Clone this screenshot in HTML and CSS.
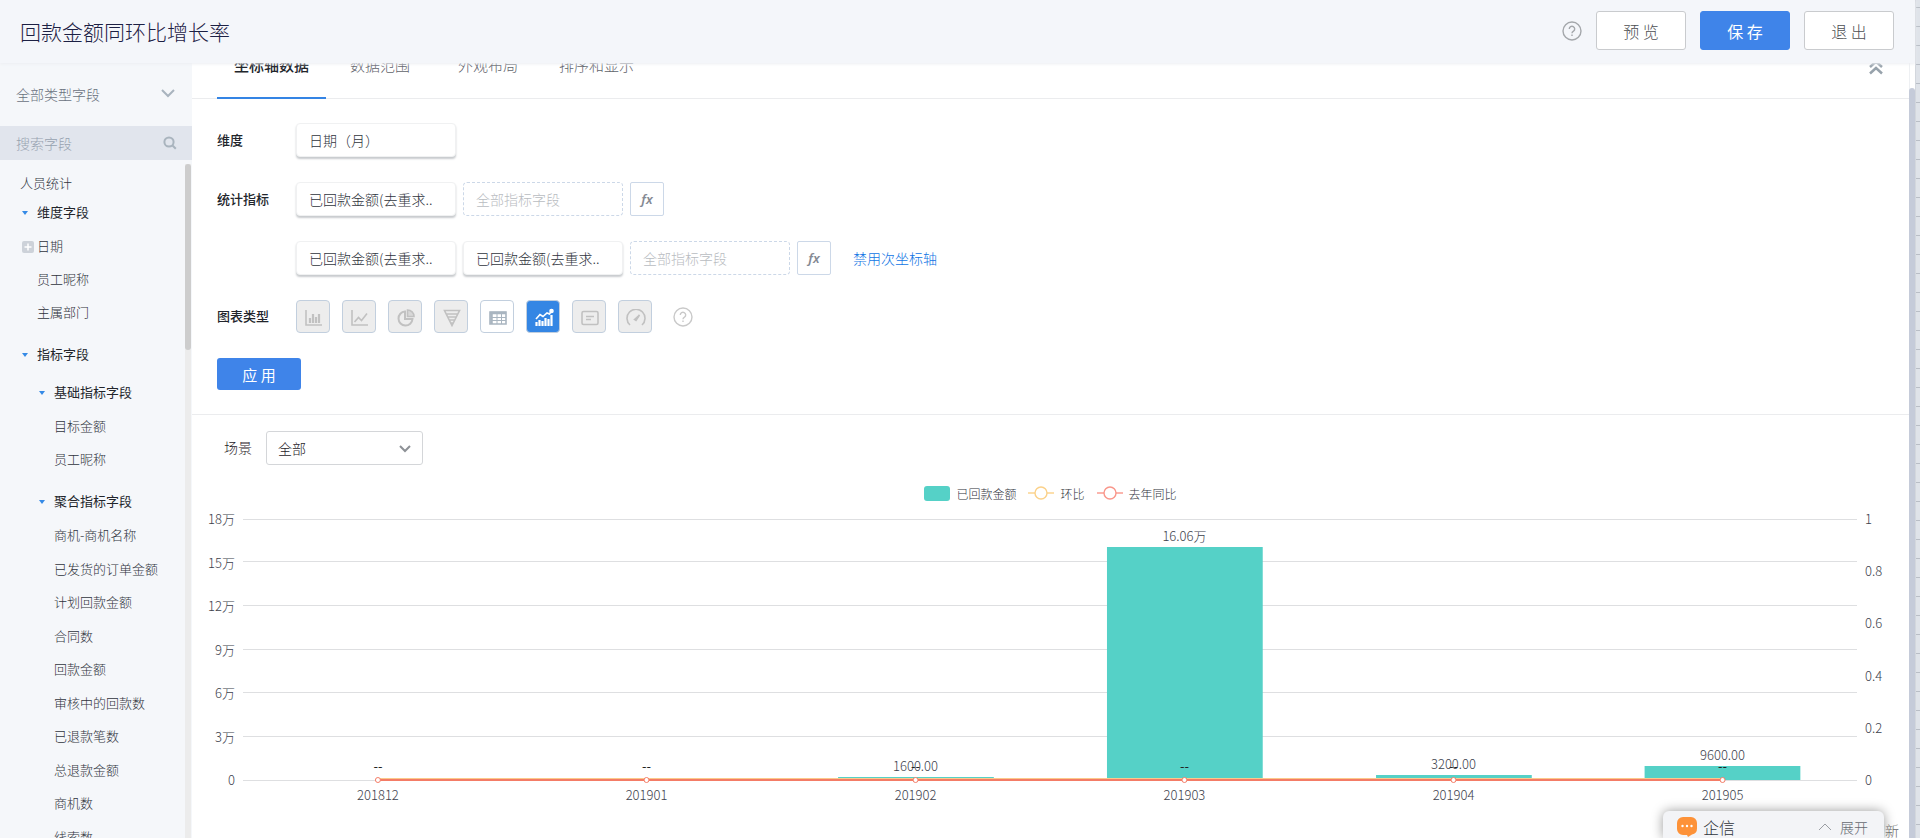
FILE: index.html
```html
<!DOCTYPE html>
<html lang="zh-CN">
<head>
<meta charset="utf-8">
<title>回款金额同环比增长率</title>
<link rel="stylesheet" href="styles.css">
</head>
<body>
<div class="app">
  <div class="window">
    <header class="header">
      <h1 class="title">回款金额同环比增长率</h1>
      <button class="help" aria-label="帮助"><svg width="20" height="20" viewBox="0 0 20 20"><circle cx="10" cy="10" r="9"/><path d="M7.3 8a2.7 2.7 0 1 1 4.2 2.2c-1 .6-1.5 1-1.5 2.1M10 13.6v1.5"/></svg></button>
      <button class="btn">预 览</button>
      <button class="btn btn-primary">保 存</button>
      <button class="btn">退 出</button>
    </header>
    <div class="body">
      <aside class="sidebar">
        <button class="type-picker">全部类型字段<svg width="14" height="9" viewBox="0 0 14 9"><path d="M1 1l6 6 6-6"/></svg></button>
        <label class="search"><input type="text" placeholder="搜索字段" aria-label="搜索字段"><svg width="14" height="14" viewBox="0 0 14 14"><circle cx="6" cy="6" r="4.6"/><path d="M9.5 9.5l3.3 3.3"/></svg></label>
        <div class="tree-wrap">
          <div class="tree">
            <div class="tree-top">人员统计</div>
            <div class="group group-first">维度字段</div>
            <ul class="fields">
              <li class="expandable"><svg width="12" height="12" viewBox="0 0 12 12"><rect width="12" height="12" rx="2"/><path d="M6 2.5v7M2.5 6h7"/></svg>日期</li>
              <li>员工昵称</li>
              <li>主属部门</li>
            </ul>
            <div class="group">指标字段</div>
            <div class="nested">
              <div class="group group-sub">基础指标字段</div>
              <ul class="fields">
                <li>目标金额</li>
                <li>员工昵称</li>
              </ul>
              <div class="group">聚合指标字段</div>
              <ul class="fields fields-long">
                <li>商机-商机名称</li>
                <li>已发货的订单金额</li>
                <li>计划回款金额</li>
                <li>合同数</li>
                <li>回款金额</li>
                <li>审核中的回款数</li>
                <li>已退款笔数</li>
                <li>总退款金额</li>
                <li>商机数</li>
                <li>线索数</li>
              </ul>
            </div>
          </div>
          <div class="tree-track"><div class="tree-thumb"></div></div>
        </div>
      </aside>
      <main class="main">
        <nav class="tabs">
          <button class="tab tab-active">坐标轴数据</button>
          <button class="tab">数据范围</button>
          <button class="tab tab-spaced">外观布局</button>
          <button class="tab">排序和显示</button>
          <button class="collapse" aria-label="收起"><svg width="14" height="15" viewBox="0 0 14 15"><path d="M1 7l6-5.500 6 5.500M1 13.500l6-5.500 6 5.500"/></svg></button>
        </nav>
        <section class="settings">
          <div class="row">
            <span class="label">维度</span>
            <div class="controls"><button class="chip">日期（月）</button></div>
          </div>
          <div class="row">
            <span class="label">统计指标</span>
            <div class="controls">
              <button class="chip">已回款金额(去重求..</button>
              <button class="slot">全部指标字段</button>
              <button class="fx">fx</button>
            </div>
          </div>
          <div class="row">
            <span class="label"></span>
            <div class="controls">
              <button class="chip">已回款金额(去重求..</button>
              <button class="chip">已回款金额(去重求..</button>
              <button class="slot">全部指标字段</button>
              <button class="fx">fx</button>
              <a class="link" href="#">禁用次坐标轴</a>
            </div>
          </div>
          <div class="row">
            <span class="label">图表类型</span>
            <div class="types">
              <button class="type" aria-label="柱状图"><svg width="18" height="18" viewBox="0 0 18 18"><path d="M1 1v15h16" fill="none"/><path d="M5 14V9M8 14V5M11 14V8M14 14V5" stroke-width="2.200"/></svg></button>
              <button class="type" aria-label="折线图"><svg width="18" height="18" viewBox="0 0 18 18"><path d="M1 1v15h16M3.500 13l4-4.500 3 3 5.500-7" fill="none"/></svg></button>
              <button class="type" aria-label="饼图"><svg width="18" height="18" viewBox="0 0 18 18"><path d="M8 2.500a7 7 0 1 0 7.500 7.500H8z" fill="none" stroke-width="2"/><path d="M10.500 1v6.500H17A6.500 6.500 0 0 0 10.500 1z" fill="#d8d8d8"/></svg></button>
              <button class="type" aria-label="漏斗图"><svg width="18" height="18" viewBox="0 0 18 18"><path d="M1.500 1.500h15L9 16.500zM3 5h12M4.500 8h9M6.500 11h5M8 14h2" fill="none"/></svg></button>
              <button class="type type-open" aria-label="表格"><svg width="18" height="18" viewBox="0 0 18 18"><path d="M1 3h16v12H1z" fill="none"/><path d="M1 4h16M2.500 3v12" stroke-width="2.500"/><path d="M3 8.500h14M3 11.500h14M8 4v11M12.500 4v11" fill="none" stroke-width="1"/></svg></button>
              <button class="type type-active" aria-label="组合图"><svg width="20" height="20" viewBox="0 0 20 20"><path d="M2 11l4-4.500 3 2 4-3.500 2.500 1 3-4.500" fill="none" stroke-width="1.600"/><circle cx="17.500" cy="3" r="1.500" fill="#fff"/><path d="M2.500 18v-4M5.500 18v-6M8.500 18v-5M11.500 18v-8M14.500 18v-7M17.500 18V7" stroke-width="2.200"/></svg></button>
              <button class="type" aria-label="卡片"><svg width="18" height="18" viewBox="0 0 18 18"><rect x="1" y="2.500" width="16" height="13" rx="1.500" fill="none"/><path d="M5 7.500h8M5 10.500h5" fill="none"/></svg></button>
              <button class="type" aria-label="仪表盘"><svg width="20" height="18" viewBox="0 0 20 18"><path d="M4 16A9 9 0 1 1 16 16" fill="none"/><path d="M8.500 10.500L13.500 6l-3.500 5.500z" fill="#b9b9b9"/></svg></button>
              <button class="help help-light" aria-label="图表类型说明"><svg width="20" height="20" viewBox="0 0 20 20"><circle cx="10" cy="10" r="9"/><path d="M7.300 8a2.700 2.700 0 1 1 4.200 2.200c-1 .6-1.500 1-1.500 2.100M10 13.600v1.500"/></svg></button>
            </div>
          </div>
          <button class="apply">应 用</button>
        </section>
        <section class="scene">
          <label for="scene">场景</label>
          <span class="select-wrap">
            <select id="scene"><option>全部</option></select>
            <svg width="12" height="8" viewBox="0 0 12 8"><path d="M1 1l5 5 5-5"/></svg>
          </span>
        </section>
        <section class="chart">
          <div class="legend">
            <span class="legend-item"><i class="swatch"></i>已回款金额</span>
            <span class="legend-item"><svg class="mom" width="26" height="14" viewBox="0 0 26 14"><path d="M0 7h26"/><circle cx="13" cy="7" r="6"/></svg>环比</span>
            <span class="legend-item"><svg class="yoy" width="26" height="14" viewBox="0 0 26 14"><path d="M0 7h26"/><circle cx="13" cy="7" r="6"/></svg>去年同比</span>
          </div>
          <div class="plot">
            <svg class="plot-svg" width="100%" height="300">
              <g class="grid">
                <line x2="100%" y1="0.500" y2="0.500"/><line x2="100%" y1="42.500" y2="42.500"/><line x2="100%" y1="86.500" y2="86.500"/><line x2="100%" y1="130.500" y2="130.500"/><line x2="100%" y1="173.500" y2="173.500"/><line x2="100%" y1="217.500" y2="217.500"/><line x2="100%" y1="261.500" y2="261.500"/>
              </g>
              <g class="tick tick-left">
                <text x="-8" y="5">18万</text><text x="-8" y="49">15万</text><text x="-8" y="92">12万</text><text x="-8" y="136">9万</text><text x="-8" y="179">6万</text><text x="-8" y="223">3万</text><text x="-8" y="266">0</text>
              </g>
              <svg x="100%" y="0" width="60" height="300" class="tick open">
                <text x="8" y="5">1</text><text x="8" y="57">0.8</text><text x="8" y="109">0.6</text><text x="8" y="162">0.4</text><text x="8" y="214">0.2</text><text x="8" y="266">0</text>
              </svg>
              <g class="bars">
                <rect x="36.870%" y="258" width="9.650%" height="3"/><rect x="53.530%" y="28" width="9.650%" height="233"/><rect x="70.200%" y="256" width="9.650%" height="5"/><rect x="86.840%" y="247" width="9.650%" height="14"/>
              </g>
              <line class="line-mom" x1="8.360%" x2="91.670%" y1="260" y2="260"/>
              <line class="line-yoy" x1="8.360%" x2="91.670%" y1="261" y2="261"/>
              <g class="dots">
                <circle cx="8.360%" cy="261" r="2.500"/><circle cx="25%" cy="261" r="2.500"/><circle cx="41.670%" cy="261" r="2.500"/><circle cx="58.330%" cy="261" r="2.500"/><circle cx="75%" cy="261" r="2.500"/><circle cx="91.670%" cy="261" r="2.500"/>
              </g>
              <g class="tick tick-mid">
                <text x="41.670%" y="252">1600.00</text><text x="58.330%" y="22">16.06万</text><text x="75%" y="250">3200.00</text><text x="91.670%" y="241">9600.00</text>
                <text x="8.360%" y="281">201812</text><text x="25%" y="281">201901</text><text x="41.670%" y="281">201902</text><text x="58.330%" y="281">201903</text><text x="75%" y="281">201904</text><text x="91.670%" y="281">201905</text>
              </g>
              <g class="tick tick-mid empty">
                <text x="8.360%" y="252">--</text><text x="25%" y="252">--</text><text x="41.670%" y="252">--</text><text x="58.330%" y="252">--</text><text x="75%" y="252">--</text><text x="91.670%" y="252">--</text>
              </g>
            </svg>
          </div>
          <div class="refresh">刷新</div>
        </section>
      </main>
      <div class="main-track"><div class="main-thumb"></div></div>
    </div>
  </div>
  <div class="backdrop"></div>
</div>
<div class="messenger">
  <svg width="22" height="22" viewBox="0 0 22 22"><path d="M7 1h8a6 6 0 0 1 6 6v5.500a6 6 0 0 1-5 6l-4 2.500-1-2H7a6 6 0 0 1-6-6V7a6 6 0 0 1 6-6z" fill="#fd9239"/><g fill="#fff"><circle cx="6.500" cy="10" r="1.200"/><circle cx="11" cy="10" r="1.200"/><circle cx="15.500" cy="10" r="1.200"/></g></svg>
  <span class="messenger-name">企信</span>
  <button class="expand"><svg width="14" height="8" viewBox="0 0 14 8"><path d="M1 7l6-6 6 6"/></svg>展开</button>
</div>
</body>
</html>
```

FILE: styles.css
```css
* { box-sizing: border-box; }
html, body { height: 100%; }
body {
  margin: 0;
  overflow: hidden;
  font-family: "Noto Sans CJK SC", sans-serif;
  font-size: 13px;
  font-weight: 300;
  color: #30343d;
}
button, input, select { font: inherit; color: inherit; margin: 0; }
button { border: 0; padding: 0; background: none; cursor: pointer; }
ul { list-style: none; margin: 0; padding: 0; }
svg { display: block; flex: none; }

.app { display: flex; height: 100%; }
.window { flex: 1; min-width: 0; display: flex; flex-direction: column; background: #fff; }
.backdrop {
  width: 5px;
  border-left: 1px solid #d3d7dd;
  background: repeating-linear-gradient(#dfe3e9 0 7px, #b9bec6 7px 8px, #dfe3e9 8px 19px);
}

.header {
  position: relative;
  z-index: 1;
  flex: none;
  display: flex;
  align-items: center;
  height: 63px;
  padding: 0 21px 2px 20px;
  background: #f4f6fa;
  box-shadow: 0 1px 3px #eceef2;
}
.title { flex: 1; margin: 0; font-size: 21px; font-weight: 300; color: #1c2044; }
.help svg { fill: none; stroke: #a4a7ab; stroke-width: 1.4; }
.help-light { margin-left: 9px; }
.help-light svg { stroke: #c9c9c9; }
.btn {
  width: 90px;
  height: 39px;
  margin-left: 14px;
  border: 1px solid #c9cbce;
  border-radius: 3px;
  background: #fff;
  font-size: 16px;
  color: #4c4e52;
}
.btn-primary { background: #3f84e9; border-color: #3f84e9; color: #fff; font-weight: 400; }

.body { flex: 1; min-height: 0; display: flex; }

.sidebar { width: 192px; flex: none; display: flex; flex-direction: column; background: #f5f7fa; }
.type-picker {
  flex: none;
  display: flex;
  align-items: center;
  justify-content: space-between;
  height: 63px;
  padding: 0 17px 2px 16px;
  font-size: 14px;
  color: #6a727e;
}
.type-picker svg { fill: none; stroke: #a9b4be; stroke-width: 2; }
.search {
  flex: none;
  display: flex;
  align-items: center;
  height: 34px;
  padding: 0 15px 0 16px;
  background: #e1e5ed;
}
.search input { flex: 1; min-width: 0; padding: 0; border: 0; outline: 0; background: none; font-size: 14px; }
.search input::placeholder { color: #97a2b0; opacity: 1; }
.search svg { fill: none; stroke: #a9b4be; stroke-width: 2; }

.tree-wrap { flex: 1; min-height: 0; display: flex; padding: 4px 1px 0 0; }
.tree { flex: 1; overflow: hidden; padding: 5px 0 0 20px; white-space: nowrap; }
.tree-top { line-height: 28px; }
.group {
  display: flex;
  align-items: center;
  height: 36px;
  margin-top: 7px;
  color: #22252b;
  font-weight: 400;
}
.group::before {
  content: "";
  width: 6px;
  height: 4px;
  margin: 4px 9px 0 2px;
  background: #358ae6;
  clip-path: polygon(0 0, 100% 0, 50% 100%);
}
.group-first { height: 28px; margin-top: 0; }
.group-sub { margin-top: 2px; }
.nested { padding-left: 17px; }
.fields li { height: 33px; line-height: 33px; padding-left: 17px; }
.fields-long li:nth-child(odd) { height: 34px; line-height: 34px; }
.fields .expandable { display: flex; align-items: center; gap: 3px; padding-left: 2px; }
.expandable svg { margin-top: 2px; }
.expandable rect { fill: #cdd2d9; }
.expandable path { stroke: #fff; stroke-width: 1.5; }
.group-first + .fields { padding-top: 4px; }
.tree-track { width: 6px; background: #ececec; }
.tree-thumb { height: 186px; border-radius: 3px; background: #cdcdcd; }

.main { flex: 1; min-width: 0; overflow: hidden; }
.tabs {
  display: flex;
  height: 66px;
  margin-top: -30px;
  padding: 0 26px 0 25px;
  border-bottom: 1px solid #ebecee;
}
.tab { height: 66px; margin-right: 7px; padding: 0 17px 4px; font-size: 15px; color: #5f636b; }
.tab-spaced { margin-left: 7px; }
.tab-active { padding-bottom: 2px; border-bottom: 2px solid #3484e4; font-weight: 500; color: #22252b; }
.collapse { margin-left: auto; }
.collapse svg { fill: none; stroke: #97a2ab; stroke-width: 2.5; margin-top: 4px; }

.settings {
  display: flex;
  flex-direction: column;
  gap: 25px;
  padding: 24px 25px;
  border-bottom: 1px solid #ebecee;
}
.row { display: flex; align-items: center; }
.label { width: 79px; flex: none; padding-bottom: 2px; font-weight: 500; color: #22252b; }
.controls { display: flex; align-items: center; gap: 7px; }
.chip, .slot {
  width: 160px;
  height: 34px;
  padding: 0 12px;
  border-radius: 4px;
  text-align: left;
  font-size: 14px;
  white-space: nowrap;
}
.chip { border: 1px solid #f0f1f2; box-shadow: 0 2px 2px #c8cbce; background: #fff; }
.slot { border: 1px dashed #ccd8e8; color: #b9bcc1; }
.fx {
  width: 34px;
  height: 34px;
  border: 1px solid #ccd8e8;
  border-radius: 2px;
  font-family: "Noto Sans", sans-serif;
  font-size: 13px;
  font-style: italic;
  font-weight: 600;
  color: #858a93;
}
.link { margin-left: 15px; font-size: 14px; color: #0f74e4; text-decoration: none; }
.types { display: flex; align-items: center; gap: 12px; }
.type {
  display: flex;
  align-items: center;
  justify-content: center;
  width: 34px;
  height: 33px;
  padding: 3px 0 0 1px;
  border: 1px solid #c2cfde;
  border-radius: 4px;
  background: #ededed;
}
.type svg { stroke: #c1c1c1; stroke-width: 1.6; }
.type-open { background: #fff; }
.type-open svg { stroke: #a9b5c0; }
.type-active { background: #3486e4; }
.type-active svg { stroke: #fff; }
.apply {
  width: 84px;
  height: 32px;
  border-radius: 3px;
  background: #3f84e9;
  color: #fff;
  font-size: 15px;
  font-weight: 400;
}

.scene { display: flex; align-items: center; gap: 14px; padding: 16px 32px; font-size: 14px; color: #1f2228; }
.scene label { padding-bottom: 2px; }
.select-wrap { position: relative; }
.select-wrap select {
  display: block;
  width: 157px;
  height: 34px;
  padding: 0 11px;
  border: 1px solid #d4d6d9;
  border-radius: 3px;
  background: #fff;
  appearance: none;
}
.select-wrap svg { position: absolute; right: 12px; top: 14px; fill: none; stroke: #8d9196; stroke-width: 2; pointer-events: none; }

.legend { display: flex; justify-content: center; gap: 12px; height: 38px; padding-top: 2px; font-size: 12px; }
.legend-item { display: flex; align-items: center; gap: 6px; height: 20px; }
.swatch { width: 26px; height: 15px; border-radius: 3px; background: #55d1c7; }
.mom { fill: #fff; stroke: #fbd189; stroke-width: 1.4; }
.yoy { fill: #fff; stroke: #f9968a; stroke-width: 1.4; }

.plot { padding: 0 52px 0 51px; }
.plot-svg, .open { overflow: visible; }
.grid line { stroke: #dedfe1; }
.tick { font-size: 13px; fill: #3c414b; }
.tick-left { text-anchor: end; }
.tick-mid { text-anchor: middle; }
.empty { fill: #222; font-weight: 400; }
.bars { fill: #55d1c7; }
.line-mom { stroke: #fbc98c; stroke-width: 2; }
.line-yoy { stroke: #f47c66; stroke-width: 2; }
.dots { fill: #fff; stroke: #f47c66; }
.refresh { padding: 0 10px; text-align: right; font-size: 14px; line-height: 22px; color: #666; }

.main-track { width: 6px; border-left: 1px solid #eef0f3; padding-top: 25px; }
.main-thumb { height: 100%; width: 6px; margin-left: -1px; border-radius: 3px 3px 0 0; background: #c5cbd9; }

.messenger {
  position: absolute;
  right: 36px;
  bottom: 0;
  z-index: 2;
  display: flex;
  align-items: center;
  width: 221px;
  height: 27px;
  padding: 5px 16px 0 13px;
  border-radius: 6px 6px 0 0;
  background: #f3f4f7;
  box-shadow: 0 0 12px #9a9a9a;
}
.messenger-name { flex: 1; margin-left: 5px; font-size: 16px; }
.expand { display: flex; align-items: center; gap: 8px; font-size: 14px; color: #666a72; }
.expand svg { fill: none; stroke: #9a9da3; }
```
